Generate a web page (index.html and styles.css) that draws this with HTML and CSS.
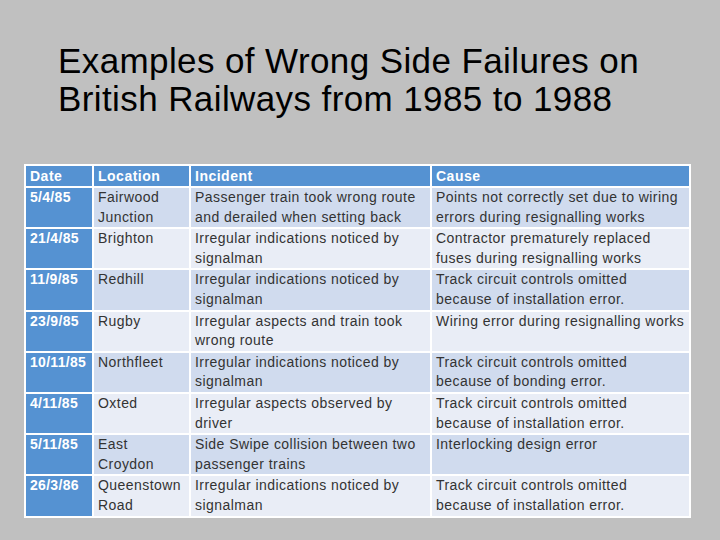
FILE: index.html
```html
<!DOCTYPE html>
<html>
<head>
<meta charset="utf-8">
<link rel="stylesheet" href="styles.css">
</head>
<body>
<h1 class="title">Examples of Wrong Side Failures on<br>British Railways from 1985 to 1988</h1>
<table class="wsf">
  <colgroup>
    <col class="c-date"><col class="c-loc"><col class="c-inc"><col class="c-cause">
  </colgroup>
  <thead>
    <tr><th>Date</th><th>Location</th><th>Incident</th><th>Cause</th></tr>
  </thead>
  <tbody>
    <tr><td>5/4/85</td><td>Fairwood Junction</td><td>Passenger train took wrong route and derailed when setting back</td><td>Points not correctly set due to wiring errors during resignalling works</td></tr>
    <tr><td>21/4/85</td><td>Brighton</td><td>Irregular indications noticed by signalman</td><td>Contractor prematurely replaced fuses during resignalling works</td></tr>
    <tr><td>11/9/85</td><td>Redhill</td><td>Irregular indications noticed by signalman</td><td>Track circuit controls omitted because of installation error.</td></tr>
    <tr><td>23/9/85</td><td>Rugby</td><td>Irregular aspects and train took wrong route</td><td>Wiring error during resignalling works</td></tr>
    <tr><td>10/11/85</td><td>Northfleet</td><td>Irregular indications noticed by signalman</td><td>Track circuit controls omitted because of bonding error.</td></tr>
    <tr><td>4/11/85</td><td>Oxted</td><td>Irregular aspects observed by driver</td><td>Track circuit controls omitted because of installation error.</td></tr>
    <tr><td>5/11/85</td><td>East Croydon</td><td>Side Swipe collision between two passenger trains</td><td>Interlocking design error</td></tr>
    <tr><td>26/3/86</td><td>Queenstown Road</td><td>Irregular indications noticed by signalman</td><td>Track circuit controls omitted because of installation error.</td></tr>
  </tbody>
</table>
</body>
</html>
```
FILE: styles.css
```css
html, body {
  margin: 0;
  padding: 0;
  background: #c0c0c0;
}
body {
  width: 720px;
  height: 540px;
  overflow: hidden;
  font-family: "Liberation Sans", Arial, sans-serif;
}
.title {
  margin: 42px 0 0 58px;
  font-size: 35px;
  line-height: 38px;
  font-weight: normal;
  letter-spacing: 0.4px;
  color: #000;
}
.wsf {
  margin: 46px 0 0 24px;
  width: 667px;
  table-layout: fixed;
  border-collapse: separate;
  border-spacing: 2px;
  background: #fff;
  font-size: 14px;
  line-height: 19.6px;
  color: #333;
}
.c-date { width: 66px; }
.c-loc { width: 95px; }
.c-inc { width: 239px; }
.c-cause { width: 257px; }
.wsf th, .wsf td {
  padding: 0 4px;
  text-align: left;
  vertical-align: top;
  letter-spacing: 0.45px;
}
.wsf th {
  background: #5592d2;
  color: #fff;
  font-weight: bold;
  height: 20px;
  line-height: 20px;
  letter-spacing: 0.5px;
}
.wsf tbody tr:nth-child(odd) td { background: #d0dbee; }
.wsf tbody tr:nth-child(even) td { background: #e9edf6; }
.wsf tbody tr td:first-child {
  background: #5592d2;
  color: #fff;
  font-weight: bold;
  letter-spacing: 0.3px;
}
```
